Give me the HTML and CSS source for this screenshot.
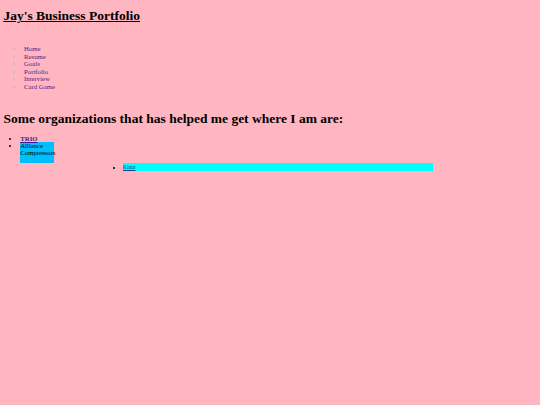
FILE: index.html
```html
<!DOCTYPE html>
<html>
<head>
<meta charset="utf-8">
<title>Jay's Business Portfolio</title>
<link rel="stylesheet" href="styles.css">
</head>
<body>
<div class="page">
  <h1 class="title"><a class="title-link" href="#">Jay's Business Portfolio</a></h1>
  <ul class="nav">
    <li class="nav-item"><a class="nav-link" href="#">Home</a></li>
    <li class="nav-item"><a class="nav-link" href="#">Resume</a></li>
    <li class="nav-item"><a class="nav-link" href="#">Goals</a></li>
    <li class="nav-item"><a class="nav-link" href="#">Portfolio</a></li>
    <li class="nav-item"><a class="nav-link" href="#">Interview</a></li>
    <li class="nav-item"><a class="nav-link" href="#">Card Game</a></li>
  </ul>
  <h2 class="heading">Some organizations that has helped me get where I am are:</h2>
  <ul class="orgs">
    <li><a class="org-link" href="#">TRIO</a></li>
    <li class="alliance">Alliance Compressors</li>
  </ul>
  <ul class="sub">
    <li class="sub-item"><a class="sub-link" href="#">Kinut</a></li>
  </ul>
</div>
</body>
</html>
```
FILE: styles.css
```css
html, body {
  margin: 0;
  padding: 0;
}
body {
  background: #ffb6c1;
  font-family: "Liberation Serif", "Times New Roman", serif;
  color: #000;
}
.page {
  zoom: 0.421875;
  padding: 8px;
  font-size: 16px;
}
.title {
  font-size: 32px;
  font-weight: bold;
  margin: 10.9px 0 0;
}
.title-link {
  color: #000;
  text-decoration: underline;
}
.nav {
  margin: 50px 0 0;
  padding-left: 49px;
  color: #c4bcaa;
}
.nav-item {
  line-height: 17.85px;
}
.nav-link {
  color: #551a8b;
  text-decoration: none;
}
.heading {
  font-size: 32px;
  font-weight: bold;
  margin: 49.2px 0 0;
}
.orgs {
  margin: 18.2px 0 0;
  padding-left: 40px;
}
.org-link {
  color: #3b1b8b;
  font-weight: bold;
  text-decoration: underline;
}
.alliance {
  background: #00bfff;
  width: 80px;
  height: 50px;
}
.sub {
  margin: 0;
  padding-left: 283.6px;
}
.sub-item {
  background: #00ffff;
  width: 734px;
  height: 20px;
  font-size: 13px;
  line-height: 20px;
}
.sub-link {
  color: #1a3a8b;
  text-decoration: underline;
}
```
